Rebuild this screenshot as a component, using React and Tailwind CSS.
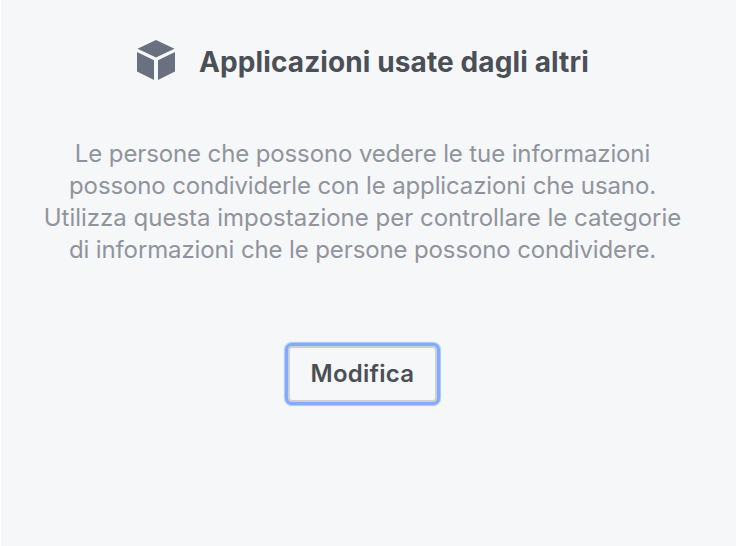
const lines = [
  { text: 'Le persone che possono vedere le tue informazioni', tracking: 'tracking-[-0.12px]' },
  { text: 'possono condividerle con le applicazioni che usano.', tracking: 'tracking-[-0.12px]' },
  { text: 'Utilizza questa impostazione per controllare le categorie', tracking: 'tracking-[-0.01px]' },
  { text: 'di informazioni che le persone possono condividere.', tracking: 'tracking-[-0.12px]' },
];

function CubeIcon() {
  return (
    <svg className="mb-1 h-[42px] w-10 shrink-0" viewBox="0 0 40 42" fill="#697180" aria-hidden="true">
      <path d="M20 1 38.5 9.7 20 18.4 1.5 9.7Z" />
      <path d="M1 13 18 21.3V41L1 32.6Z" />
      <path d="M39 13 22 21.3V41L39 32.6Z" />
    </svg>
  );
}

export default function App() {
  return (
    <div className="h-[546px] w-[752px] overflow-hidden bg-white pl-px font-['Inter',sans-serif]">
      <section className="flex h-[546px] w-[735px] flex-col bg-[#f6f7f9] pt-[39px]">
        <header className="flex h-[46px] items-center pl-[135px]">
          <CubeIcon />
          <h2 className="ml-[23px] whitespace-nowrap text-[28px] font-bold leading-[46px] tracking-[0.11px] text-[#4b4f56]">
            Applicazioni usate dagli altri
          </h2>
        </header>
        <p className="mt-[53px] w-[723px] text-center text-[24px] leading-8 text-[#90949c]">
          {lines.map(({ text, tracking }) => (
            <span key={text} className={`block whitespace-nowrap ${tracking}`}>{text}</span>
          ))}
        </p>
        <button
          type="button"
          autoFocus
          className="ml-[287px] mt-20 h-14 w-[149px] rounded-[4px] border-2 border-[#ced0d4] bg-[#f6f7f9] pb-px text-[24px] font-semibold tracking-[0.25px] text-[#4b4f56] shadow-[0_0_0_3px_#83aafb,0_0_1px_4px_#a9c5fc] outline-none"
        >
          Modifica
        </button>
      </section>
    </div>
  );
}
